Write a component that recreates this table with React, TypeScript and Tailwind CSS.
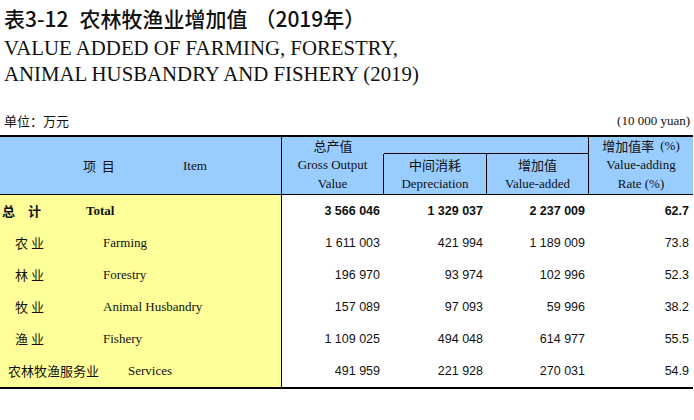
import React from 'react';

const serif = "font-['Liberation_Serif','Noto_Sans_CJK_SC',serif]";
const cjk = "font-['Noto_Sans_CJK_SC',sans-serif]";
const num = "font-['Liberation_Sans',Arial,sans-serif]";

interface Row {
  cn: string;
  en: string;
  cnPad: number;
  enAt: number;
  values: string[];
  bold?: boolean;
}

const rows: Row[] = [
  { cn: '总　计', en: 'Total', cnPad: 2, enAt: 86, values: ['3 566 046', '1 329 037', '2 237 009', '62.7'], bold: true },
  { cn: '农 业', en: 'Farming', cnPad: 15, enAt: 103, values: ['1 611 003', '421 994', '1 189 009', '73.8'] },
  { cn: '林 业', en: 'Forestry', cnPad: 15, enAt: 103, values: ['196 970', '93 974', '102 996', '52.3'] },
  { cn: '牧 业', en: 'Animal Husbandry', cnPad: 15, enAt: 103, values: ['157 089', '97 093', '59 996', '38.2'] },
  { cn: '渔 业', en: 'Fishery', cnPad: 15, enAt: 103, values: ['1 109 025', '494 048', '614 977', '55.5'] },
  { cn: '农林牧渔服务业', en: 'Services', cnPad: 8, enAt: 128, values: ['491 959', '221 928', '270 031', '54.9'] },
];

export default function App() {
  return <div className="w-[694px] h-[420px] overflow-hidden bg-white text-[#111]">
      {/* Title */}
      <div className={`h-[35px] pt-[3px] pl-[4px] flex items-center text-[21px] font-medium ${cjk}`}>
        <span>表3-12</span>
        <span className="ml-[11px]">农林牧渔业增加值</span>
        <span className="ml-[7px]">（2019年）</span>
      </div>
      <div className={`pl-[4px] text-[20.8px] leading-[26px] ${serif}`}>
        <div>VALUE ADDED OF FARMING, FORESTRY,</div>
        <div>ANIMAL HUSBANDRY AND FISHERY (2019)</div>
      </div>

      {/* Unit line */}
      <div className="mt-[24px] mb-[4px] h-[20px] flex items-center justify-between pl-[4px] pr-[4px]">
        <span className={`text-[13px] ${cjk}`}>单位：万元</span>
        <span className={`text-[13px] ${serif}`}>(10 000 yuan)</span>
      </div>

      {/* Table */}
      <div className="w-[693px] border-t-2 border-b-2 border-black">
        {/* Header */}
        <div className="grid grid-cols-[282px_102px_103px_102px_104px] grid-rows-[17px_40px] bg-[#99ccff] border-b border-black text-[13px] leading-[19px]">
          <div className="row-span-2 border-r border-black flex items-center">
            <span className={`pl-[83px] w-[183px] ${cjk}`}>项&nbsp;&nbsp;目</span>
            <span className={serif}>Item</span>
          </div>
          <div className={`flex items-center justify-center ${cjk}`}>总产值</div>
          <div className="col-span-2 border-r border-b border-black" />
          <div className={`flex items-center justify-center ${cjk}`}>
            增加值率 <span className={`ml-[6px] ${serif}`}>(%)</span>
          </div>
          <div className={`border-r border-black flex flex-col items-center justify-center ${serif}`}>
            <span>Gross Output</span>
            <span>Value</span>
          </div>
          <div className={`border-r border-black flex flex-col items-center justify-center ${serif}`}>
            <span className={cjk}>中间消耗</span>
            <span>Depreciation</span>
          </div>
          <div className={`border-r border-black flex flex-col items-center justify-center ${serif}`}>
            <span className={cjk}>增加值</span>
            <span>Value-added</span>
          </div>
          <div className={`flex flex-col items-center justify-center ${serif}`}>
            <span>Value-adding</span>
            <span>Rate (%)</span>
          </div>
        </div>

        {/* Body */}
        {rows.map(r => <div key={r.en} className="grid grid-cols-[282px_102px_103px_102px_104px] h-[32px]">
            <div className={`bg-[#ffff99] border-r border-black flex items-center ${r.bold ? 'font-bold' : ''}`}>
              <span className={`text-[13px] ${cjk}`} style={{ paddingLeft: r.cnPad, width: r.enAt }}>{r.cn}</span>
              <span className={`text-[13px] ${serif}`}>{r.en}</span>
            </div>
            {r.values.map((v, i) => <div key={i} className={`flex items-center justify-end pr-[4px] text-[12.5px] ${num} ${r.bold ? 'font-bold' : ''}`}>
                {v}
              </div>)}
          </div>)}
      </div>
    </div>;
}
